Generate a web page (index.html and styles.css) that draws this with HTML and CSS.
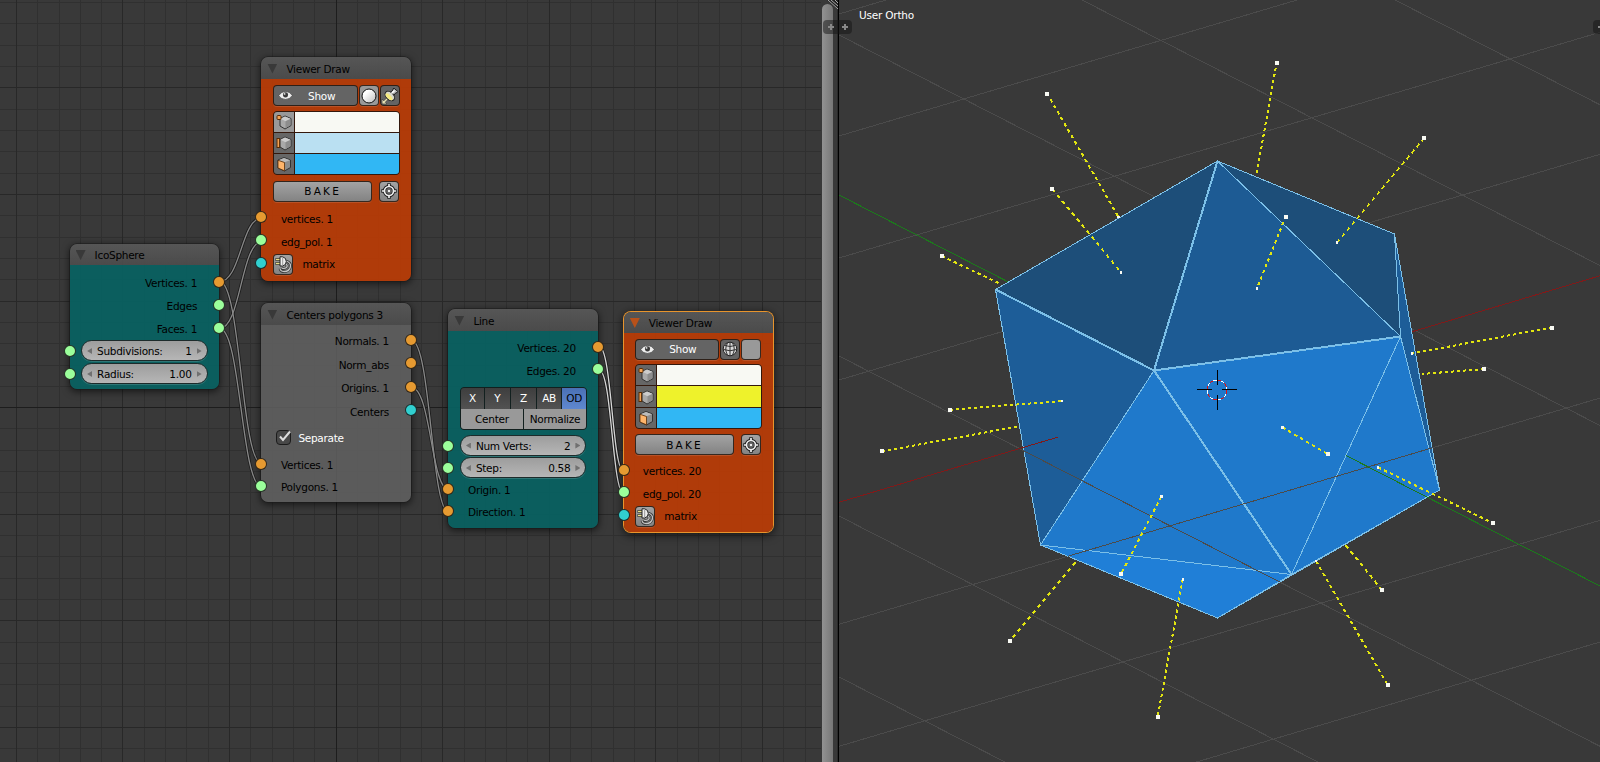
FILE: index.html
```html
<!DOCTYPE html>
<html lang="en">
<head>
<meta charset="utf-8">
<title>Node editor</title>
<link rel="stylesheet" href="styles.css">
</head>
<body>
<svg class="defs" width="0" height="0" aria-hidden="true">
  <defs>
    <linearGradient id="ball" x1="0" y1="0" x2="1" y2="1"><stop offset="0.3" stop-color="#fff"/><stop offset="1" stop-color="#bbb"/></linearGradient>
    <symbol id="eye" viewBox="0 0 16 12"><path d="M.5 6.200Q3.500 1.500 8 1.500Q12.500 1.500 15.500 6Q12.500 10.300 8 10.300Q3.500 10.300 .5 6.200Z" fill="#eee" stroke="#333" stroke-width=".7"/><circle cx="8" cy="5.300" r="2.800" fill="#3c3c3c"/><circle cx="7" cy="4.300" r="1" fill="#ddd"/></symbol>
    <symbol id="sphere" viewBox="0 0 16 16"><circle cx="8" cy="8" r="7" fill="url(#ball)" stroke="#111"/></symbol>
    <symbol id="globe" viewBox="0 0 16 16"><circle cx="8" cy="8" r="6.800" fill="#d8d8d8" stroke="#222"/><path d="M8 1v14M1.500 8.500Q8 11 14.500 8.500M5.500 2Q2 8 5.500 14M10.500 2Q14 8 10.500 14M3 4.500Q8 6.500 13 4.500" fill="none" stroke="#333"/></symbol>
    <symbol id="pin" viewBox="0 0 18 18"><path d="M1 17V12L2.800 13.800L6 10.500L7.500 12L4.300 15.300L6 17Z" fill="#e6e2b4" stroke="#444" stroke-width=".8"/><path d="M8.500 6L12 3.200Q11.500 1.500 13 1.200L16.800 4.500Q16.500 6.200 14.800 5.800L12.300 9Z" fill="#bbb" stroke="#222"/><ellipse cx="8.800" cy="9" rx="3.600" ry="5.600" transform="rotate(-45 8.800 9)" fill="#d8d8cc" stroke="#222"/><ellipse cx="8" cy="9.800" rx="2" ry="4.400" transform="rotate(-45 8 9.800)" fill="#f4ea80"/><path d="M10.500 6.500L13.500 3.500" stroke="#fff" stroke-width="1.600"/></symbol>
    <symbol id="cube" viewBox="0 0 16 16"><path d="M9 2L15 4.500V11.500L9 15L4 12V4.500Z" fill="#a9a9a9" stroke="#333"/><path d="M9 2.500L14.500 4.800L9.500 7.200L4.500 4.800Z" fill="#ccc"/><path d="M9.500 7.200L14.500 4.900V11.300L9.500 14.300Z" fill="#8d8d8d"/></symbol>
    <symbol id="vertex" viewBox="0 0 16 16"><use href="#cube"/><rect x="1" y="1.500" width="4" height="4" rx="1" fill="#f3a354" stroke="#5a2d06"/></symbol>
    <symbol id="edge" viewBox="0 0 16 16"><use href="#cube"/><rect x="1" y="3.500" width="2.600" height="9" fill="#f3a354" stroke="#5a2d06"/></symbol>
    <symbol id="face" viewBox="0 0 16 16"><path d="M8 1.500L14.500 4V11.500L8.500 15L2 12V4Z" fill="#8d8d8d" stroke="#333"/><path d="M8 2L14 4.200L8.500 6.300L2.500 4.200Z" fill="#bbb"/><path d="M2 4.300L8.500 6.500V14.800L2 12Z" fill="#ffb56b" stroke="#5a2d06" stroke-width=".8"/></symbol>
    <symbol id="target" viewBox="0 0 16 16"><g fill="none" stroke="#222" stroke-width="3.600"><circle cx="8" cy="8" r="4.500"/><path d="M8 .3v4M8 11.700v4M.3 8h4M11.700 8h4"/></g><g fill="none" stroke="#eee" stroke-width="1.700"><circle cx="8" cy="8" r="4.500"/><path d="M8 1v3M8 12v3M1 8h3M12 8h3"/></g><circle cx="8" cy="8" r="1.900" fill="#eee" stroke="#222" stroke-width=".8"/></symbol>
    <symbol id="plug" viewBox="0 0 18 18"><path d="M12 6Q17 7.500 16.500 11.500Q15.500 16.500 10 16.500Q6.500 16.500 6 13.500M12 9Q14 10.500 12.500 12.500Q11 13.800 8 13.200" fill="none" stroke="#333" stroke-width="2.800"/><path d="M12 6Q17 7.500 16.500 11.500Q15.500 16.500 10 16.500Q6.500 16.500 6 13.500M12 9Q14 10.500 12.500 12.500Q11 13.800 8 13.200" fill="none" stroke="#c4c4c4" stroke-width="1.300"/><path d="M1.500 4.500H7M1.500 8.500H7" stroke="#333" stroke-width="2.800"/><path d="M2 4.500H7M2 8.500H7" stroke="#ece08a" stroke-width="1.400"/><path d="M6 1.800H8.500Q12.300 2.500 12.300 6.500Q12.300 10.300 8.500 11H6Z" fill="#eee" stroke="#222"/><path d="M8.700 2.500v8" stroke="#999"/></symbol>
  </defs>
</svg>
<main class="screen">
  <section class="editor">
    <svg class="layer" width="821" height="762" viewBox="0 0 821 762">
      <g class="grid" shape-rendering="crispEdges">
        <path class="minor" d="M37.500 0v762M59.500 0v762M80.500 0v762M101.500 0v762M144.500 0v762M165.500 0v762M186.500 0v762M208.500 0v762M250.500 0v762M272.500 0v762M293.500 0v762M314.500 0v762M357.500 0v762M378.500 0v762M400.500 0v762M421.500 0v762M464.500 0v762M485.500 0v762M506.500 0v762M527.500 0v762M570.500 0v762M591.500 0v762M613.500 0v762M634.500 0v762M677.500 0v762M698.500 0v762M719.500 0v762M741.500 0v762M783.500 0v762M805.500 0v762M0 2.500h821M0 23.500h821M0 45.500h821M0 66.500h821M0 109.500h821M0 130.500h821M0 151.500h821M0 173.500h821M0 215.500h821M0 237.500h821M0 258.500h821M0 279.500h821M0 322.500h821M0 343.500h821M0 365.500h821M0 386.500h821M0 428.500h821M0 450.500h821M0 471.500h821M0 492.500h821M0 535.500h821M0 556.500h821M0 578.500h821M0 599.500h821M0 642.500h821M0 663.500h821M0 684.500h821M0 706.500h821M0 748.500h821"/>
        <path class="major" d="M16.500 0v762M122.500 0v762M229.500 0v762M442.500 0v762M549.500 0v762M655.500 0v762M762.500 0v762M0 87.500h821M0 194.500h821M0 301.500h821M0 514.500h821M0 620.500h821M0 727.500h821"/>
        <path class="origin" d="M336.500 0v762M0 407.500h821"/>
      </g>
      <g class="wires">
        <g id="links">
          <path d="M219.500 281.500C241 281.500 241 218 262 218"/>
          <path d="M219.500 328.500C241 328.500 241 241.500 262 241.500"/>
          <path d="M219.500 281.500C241 281.500 241 464 262 464"/>
          <path d="M219.500 328.500C241 328.500 241 487 262 487"/>
          <path d="M411.500 340.500C431 340.500 431 512.500 449 512.500"/>
          <path d="M411.500 387.500C431 387.500 431 490 449 490"/>
        </g>
        <use href="#links" class="core"/>
        <g id="hotlinks">
          <path d="M599 346.500C612 346.500 612 472 624 472"/>
          <path d="M599 370C612 370 612 494 624 494"/>
        </g>
        <use href="#hotlinks" class="core hot"/>
      </g>
    </svg>

    <article class="node viewer n-viewer1">
      <header><i class="tri"></i>Viewer Draw</header>
      <div class="body">
        <div class="tools">
          <span class="btn dark show"><svg class="i-eye"><use href="#eye"/></svg><b>Show</b></span>
          <span class="btn sq"><svg class="i16"><use href="#sphere"/></svg></span>
          <span class="btn dark sq"><svg class="i18"><use href="#pin"/></svg></span>
        </div>
        <div class="swatches">
          <span class="lit"><svg class="i16"><use href="#vertex"/></svg></span><span class="c-white"></span>
          <span><svg class="i16"><use href="#edge"/></svg></span><span class="c-pale"></span>
          <span><svg class="i16"><use href="#face"/></svg></span><span class="c-blue"></span>
        </div>
        <div class="tools bakes"><span class="btn grad bake">BAKE</span><span class="btn sq grad"><svg class="i16"><use href="#target"/></svg></span></div>
        <div class="row in"><i class="sock l o"></i>vertices. 1</div>
        <div class="row in"><i class="sock l g"></i>edg_pol. 1</div>
        <div class="row in mat"><i class="sock l t"></i><span class="btn sq grad"><svg class="i18"><use href="#plug"/></svg></span>matrix</div>
      </div>
    </article>

    <article class="node n-ico">
      <header><i class="tri"></i>IcoSphere</header>
      <div class="body">
        <div class="row out">Vertices. 1<i class="sock r o"></i></div>
        <div class="row out">Edges<i class="sock r g"></i></div>
        <div class="row out">Faces. 1<i class="sock r g"></i></div>
        <div class="slide"><i class="sock l g"></i><div class="num"><span>Subdivisions:</span><span>1</span></div></div>
        <div class="slide"><i class="sock l g"></i><div class="num"><span>Radius:</span><span>1.00</span></div></div>
      </div>
    </article>

    <article class="node n-centers">
      <header><i class="tri"></i>Centers polygons 3</header>
      <div class="body">
        <div class="row out">Normals. 1<i class="sock r o"></i></div>
        <div class="row out">Norm_abs<i class="sock r o"></i></div>
        <div class="row out">Origins. 1<i class="sock r o"></i></div>
        <div class="row out">Centers<i class="sock r t"></i></div>
        <div class="check"><span class="box"><svg viewBox="0 0 16 16"><path d="M4 6.500L7 10L14 1.500"/></svg></span>Separate</div>
        <div class="row in"><i class="sock l o"></i>Vertices. 1</div>
        <div class="row in"><i class="sock l g"></i>Polygons. 1</div>
      </div>
    </article>

    <article class="node n-line">
      <header><i class="tri"></i>Line</header>
      <div class="body">
        <div class="row out">Vertices. 20<i class="sock r o"></i></div>
        <div class="row out">Edges. 20<i class="sock r g"></i></div>
        <div class="modes">
          <div class="axes"><span>X</span><span>Y</span><span>Z</span><span>AB</span><span class="on">OD</span></div>
          <div class="opts"><span>Center</span><span>Normalize</span></div>
        </div>
        <div class="slide"><i class="sock l g"></i><div class="num"><span>Num Verts:</span><span>2</span></div></div>
        <div class="slide"><i class="sock l g"></i><div class="num"><span>Step:</span><span>0.58</span></div></div>
        <div class="row in"><i class="sock l o"></i>Origin. 1</div>
        <div class="row in"><i class="sock l o"></i>Direction. 1</div>
      </div>
    </article>

    <article class="node viewer active n-viewer2">
      <header><i class="tri"></i>Viewer Draw</header>
      <div class="body">
        <div class="tools">
          <span class="btn dark show"><svg class="i-eye"><use href="#eye"/></svg><b>Show</b></span>
          <span class="btn dark sq"><svg class="i16"><use href="#globe"/></svg></span>
          <span class="btn sq"></span>
        </div>
        <div class="swatches">
          <span><svg class="i16"><use href="#vertex"/></svg></span><span class="c-white"></span>
          <span><svg class="i16"><use href="#edge"/></svg></span><span class="c-yellow"></span>
          <span><svg class="i16"><use href="#face"/></svg></span><span class="c-blue"></span>
        </div>
        <div class="tools bakes"><span class="btn grad bake">BAKE</span><span class="btn sq grad"><svg class="i16"><use href="#target"/></svg></span></div>
        <div class="row in"><i class="sock l o"></i>vertices. 20</div>
        <div class="row in"><i class="sock l g"></i>edg_pol. 20</div>
        <div class="row in mat"><i class="sock l t"></i><span class="btn sq grad"><svg class="i18"><use href="#plug"/></svg></span>matrix</div>
      </div>
    </article>
  </section>

  <div class="scroll"><div class="bar"></div></div>

  <section class="view">
    <svg class="layer" width="761" height="762" viewBox="839 0 761 762" shape-rendering="crispEdges">
      <g class="floor">
        <path d="M839 14L886 0M839 136L1297 0M839 258L1600 32.300M839 380L1600 154.300M839 624.300L1600 398M839 746.300L1600 520.300M839 868.300L1600 642"/>
        <path d="M1395 0L1600 104.800M1082 0L1600 265.500M839 35L1600 425.500M839 356L1600 746.300M839 516L1318 762M839 677L1005 762"/>
        <path class="ax-x" d="M839 502.300L1600 275.800"/>
        <path class="ax-y" d="M839 195L1600 586"/>
      </g>
      <g class="faces">
        <path fill="#1d4e79" d="M1217.500 161L995.500 289.500L1154 370.500Z"/>
        <path fill="#1d5b94" d="M1217.500 161L1154 370.500L1400.500 336.500Z"/>
        <path fill="#1d4e79" d="M1217.500 161L1400.500 336.500L1394.500 234Z"/>
        <path fill="#1d5d98" d="M1394.500 234L1400.500 336.500L1439.500 490Z"/>
        <path fill="#1d5d98" d="M995.500 289.500L1154 370.500L1040.500 545Z"/>
        <path fill="#1f79cb" d="M1154 370.500L1400.500 336.500L1439.500 490L1291.500 574.500L1040.500 545Z"/>
        <path fill="#207fd7" d="M1040.500 545L1291.500 574.500L1439.500 490L1217.500 618Z"/>
      </g>
      <path class="edges" d="M1217.500 161L995.500 289.500L1040.500 545L1217.500 618L1439.500 490L1394.500 234ZM1217.500 161L1400.500 336.500L1439.500 490M1394.500 234L1400.500 336.500L1291.500 574.500M1154 370.500L1040.500 545L1291.500 574.500L1217.500 618M1291.500 574.500L1439.500 490"/>
      <path class="edges bold" d="M1217.500 161L1154 370.500L1400.500 336.500M995.500 289.500L1154 370.500L1291.500 574.500"/>
      <g class="floor">
        <path d="M1068 556.200L1435 447M1021 449.400L1282 583.200"/>
        <path class="ax-x" d="M1022 447.800L1057.700 437.200"/>
        <path class="ax-y" d="M1346 455.500L1439 503.300"/>
      </g>
      <g class="normals">
        <path pathLength="111" d="M1276.700 62.300L1256.700 173.300"/>
        <path pathLength="124" d="M1047 93.300L1118.500 217"/>
        <path pathLength="84" d="M1052.300 189L1121.300 272.700"/>
        <path pathLength="105" d="M1424.300 138L1337 242.700"/>
        <path pathLength="72" d="M1285.700 216.300L1257 288.300"/>
        <path pathLength="60" d="M941.800 256L1001.500 284.500"/>
        <path pathLength="140" d="M1552.300 327.300L1412 353.500"/>
        <path pathLength="62" d="M1484 369L1422 374"/>
        <path pathLength="112" d="M950.300 409.700L1062 401"/>
        <path pathLength="137" d="M882 451.300L1019 426.300"/>
        <path pathLength="46" d="M1282.300 427.300L1328 454.300"/>
        <path pathLength="115" d="M1378 467.300L1492.700 523"/>
        <path pathLength="77" d="M1161.300 496.700L1121 574"/>
        <path pathLength="137" d="M1182.700 579.500L1157.700 716.700"/>
        <path pathLength="124" d="M1316 561L1387.700 685"/>
        <path pathLength="45" d="M1345.700 545.300L1382 590"/>
        <path pathLength="78" d="M1075.300 562.300L1010.300 640.700"/>
      </g>
      <path class="tips" d="M1276.500 62.500h.1M1047 93.500h.1M1052.300 189h.1M1424.300 138h.1M1285.700 216.500h.1M941.700 256h.1M1552.300 327.500h.1M1484 369h.1M950.300 409.700h.1M882 451.300h.1M1328 454h.1M1493 523h.1M1121 574h.1M1157.700 716.700h.1M1387.700 685h.1M1382 590h.1M1010.300 640.700h.1"/>
      <path class="roots" d="M1118.500 217h.1M1121 272.700h.1M1337 242.700h.1M1257 288.300h.1M1412 353.500h.1M1062 401h.1M1282.300 427.300h.1M1378 467.300h.1M1161.300 496.700h.1M1182.900 579.500h.1M1316 561h.1"/>
      <g class="cursor">
        <circle cx="1217" cy="390" r="10"/>
        <circle class="red" cx="1217" cy="390" r="10"/>
        <path d="M1197 389.500h15M1222 389.500h15M1217.500 370v15M1217.500 395v15"/>
      </g>
    </svg>
    <span class="mode">User Ortho</span>
    <span class="tab far"></span>
  </section>

  <span class="tab mid-l"></span><span class="tab mid-r"></span>
  <svg class="split" width="12" height="10" viewBox="0 0 12 10"><path d="M0 0h11v10Z" fill="#222"/><path d="M1 0L11 9M4 0L11 6M8 0L11 3" stroke="#aaa"/></svg>
</main>
</body>
</html>
```

FILE: styles.css
```css
* { box-sizing: border-box; }
body { margin: 0; background: #393939; font: 10.5px/14px "DejaVu Sans", sans-serif; letter-spacing: -0.28px; color: #000; overflow: hidden; }
.defs { position: absolute; }
.screen { position: relative; display: flex; width: 1600px; height: 762px; overflow: hidden; }
.editor { position: relative; width: 822px; height: 762px; flex: none; }
.layer { display: block; }
.grid { fill: none; stroke-width: 1; }
.minor { stroke: #303030; }
.major { stroke: #282828; }
.origin { stroke: #1d1d1d; }
.wires path { fill: none; }
.wires { stroke: #1c1c1c; stroke-width: 3; }
.wires .core { stroke: #888; stroke-width: 1.3; }
.wires .hot { stroke: #d8d8d8; }

/* nodes */
.node { position: absolute; width: 149.5px; border-radius: 7px; box-shadow: 0 0 0 .6px #1a1a1a, 0 2px 7px 1px rgba(0,0,0,.55); display: flex; flex-direction: column; --fill: rgba(8,96,96,.95); }
.viewer { --fill: rgba(180,59,7,.97); }
.active { box-shadow: 0 0 0 1px #e8942c, 0 2px 8px 2px rgba(0,0,0,.55); }
.node header { height: 21.5px; padding: 1.5px 0 0 6px; border-radius: 7px 7px 0 0; background: linear-gradient(rgba(88,88,88,.93), rgba(76,76,76,.93)); display: flex; align-items: center; flex: none; }
.tri { width: 10px; height: 10px; margin-right: 9px; background: #393939; clip-path: polygon(0 0, 100% 0, 50% 100%); }
.active .tri { background: #b8511a; }
.body { flex: 1; background: var(--fill); border-radius: 0 0 7px 7px; padding: 0 11.5px; display: flex; flex-direction: column; }
.n-viewer1 { left: 261.4px; top: 57px; height: 224px; }
.n-viewer2 { left: 623.8px; top: 311.6px; width: 149px; height: 220.6px; }
.n-ico { left: 69.6px; top: 243.5px; height: 145.5px; }
.n-centers { left: 261.4px; top: 303px; height: 199px; --fill: rgba(96,96,96,.88); }
.n-line { left: 448.4px; top: 309px; height: 218.5px; }

.row { position: relative; height: 22.8px; display: flex; align-items: center; flex: none; margin: 0 -11.5px; }
.out { justify-content: flex-end; padding-right: 22px; }
.in { padding-left: 19.5px; }
.sock { position: absolute; width: 12px; height: 12px; border-radius: 50%; border: 1px solid rgba(20,20,20,.85); top: calc(50% - 7.3px); }
.slide .sock { top: 4.5px; }
.l { left: -6px; }
.r { right: -6px; }
.o { background: #e69a31; }
.g { background: #9bff9b; }
.t { background: #31cfcf; }

.btn { border: 1px solid rgba(35,20,10,.85); border-radius: 4px; background: #999; display: flex; align-items: center; justify-content: center; flex: none; box-shadow: 0 1px 0 rgba(255,255,255,.12); }
.dark { background: #646464; color: #fff; }
.grad { background: linear-gradient(#a3a3a3, #838383); }
.sq { width: 20px; height: 21px; }
.btn b { font-weight: 400; flex: 1; text-align: center; padding-right: 7px; }
.i-eye { width: 15px; height: 11px; margin-left: 4px; }
.i16 { width: 16px; height: 16px; }
.i18 { width: 18px; height: 18px; }
.tools { display: flex; gap: 1px; margin-top: 6.5px; flex: none; }
.show { width: 85.5px; height: 21px; }
.swatches { display: grid; grid-template-columns: 20px 1fr; grid-template-rows: repeat(3, 20.3px); gap: 1px; margin-top: 4.5px; width: 127.5px; border: 1px solid #33180c; border-radius: 4px; background: #33180c; overflow: hidden; flex: none; }
.swatches span { background: #666; display: flex; align-items: center; justify-content: center; }
.swatches .lit { background: #999; }
.swatches .c-white { background: #f8f9f3; }
.swatches .c-pale { background: #bae0f2; }
.swatches .c-blue { background: #31b7f4; }
.swatches .c-yellow { background: #eef22b; }
.bakes { margin: 5.5px 0 5.5px; gap: 7px; }
.bake { width: 99.5px; letter-spacing: 2.2px; }
.mat { padding-left: 11.5px; gap: 9.5px; }
.n-viewer2 .body { padding-left: 11px; }
.n-viewer2 .tools:first-child { margin-top: 5.5px; }
.n-viewer2 .show { width: 84px; }
.n-viewer2 .row { height: 22.4px; margin-left: -11px; }
.n-viewer2 .bakes { margin-bottom: 4.7px; }
.n-viewer2 .in { padding-left: 19px; }
.n-viewer2 .mat { padding-left: 11px; }

.n-ico .body { padding-top: 7px; }
.slide { position: relative; height: 21px; margin: 0 -11.5px 2px; padding: 0 11.5px; flex: none; }
.num { height: 21px; border: 1px solid #1d2b2b; border-radius: 11px; background: linear-gradient(#9d9d9d, #b6b6b6); box-shadow: 0 1px 0 rgba(255,255,255,.15); display: flex; justify-content: space-between; align-items: center; padding: 0 15px; position: relative; }
.num::before, .num::after { content: ""; position: absolute; top: 6.5px; width: 5px; height: 6px; background: #707070; }
.num::before { left: 5px; clip-path: polygon(100% 0, 100% 100%, 0 50%); }
.num::after { right: 5px; clip-path: polygon(0 0, 100% 50%, 0 100%); }
.n-centers .body { padding-top: 5px; }
.n-centers .out { height: 23.5px; }
.check { display: flex; align-items: center; gap: 7.5px; color: #fff; height: 20px; margin: 4.4px 0 6px 3px; flex: none; }
.n-centers .in { height: 22.4px; }
.box { width: 15px; height: 15px; border: 1px solid #1c1c1c; border-radius: 4px; background: #484848; display: flex; }
.box svg { width: 16px; height: 16px; overflow: visible; flex: none; margin: -1px 0 0 -1px; fill: none; stroke: #ddd; stroke-width: 2; }
.n-line .body { padding-top: 6px; }
.n-line .slide { margin-bottom: 1.3px; }
.n-line .in { height: 22.4px; top: -.8px; }
.modes { margin: 4.6px 0 5.4px; width: 127px; border: 1px solid #12201f; border-radius: 4px; overflow: hidden; background: #12201f; flex: none; }
.axes { display: grid; grid-template-columns: 23px 25px 25px 24.5px 1fr; gap: 1px; height: 20px; color: #fff; }
.axes span { background: linear-gradient(#3e3e3e, #525252); text-align: center; line-height: 21px; }
.axes .on { background: linear-gradient(#4a70b5, #5f88d0); color: #000; }
.opts { display: grid; grid-template-columns: 1fr 1fr; gap: 1px; margin-top: 1px; height: 20px; }
.opts span { background: #999; text-align: center; line-height: 21px; }

/* divider */
.scroll { width: 17px; height: 762px; flex: none; border-right: 1px solid #000; padding-top: 4px; box-shadow: inset -1px 0 #2a2a2a; }
.bar { width: 11px; height: 770px; border-radius: 6px; background: linear-gradient(90deg, #929292, #777); }
.view { position: relative; width: 761px; height: 762px; flex: none; }
.mode { position: absolute; left: 20px; top: 8px; color: #fff; letter-spacing: -.2px; }
.tab { position: absolute; top: 20px; width: 15px; height: 14px; background: linear-gradient(#888,#888) center/6px 2px no-repeat, linear-gradient(#888,#888) center/2px 6px no-repeat, rgba(20,20,20,.5); }
.mid-l { left: 823px; border-radius: 4px 0 0 4px; }
.mid-r { left: 838px; border-radius: 0 4px 4px 0; width: 14px; }
.far { left: 754px; border-radius: 4px 0 0 4px; }
.split { position: absolute; left: 827px; top: 0; }

/* viewport */
.floor path { fill: none; stroke: #4b4b4b; }
.floor .ax-x { stroke: #801a1a; }
.floor .ax-y { stroke: #1b7a1b; }
.edges { fill: none; stroke: #7cc0e8; stroke-width: 1; }
.bold { stroke-width: 2; }
.normals path { stroke: #e2e610; stroke-width: 2; stroke-dasharray: 3 3; fill: none; }
.tips { stroke: #f8f9f3; stroke-width: 4; stroke-linecap: square; }
.roots { stroke: #f8f9f3; stroke-width: 2.5; stroke-linecap: square; }
.cursor { fill: none; stroke: #fff; stroke-width: 1; }
.cursor .red { stroke: #e01010; stroke-dasharray: 3.93 3.93; }
.cursor path { stroke: #000; }
```
